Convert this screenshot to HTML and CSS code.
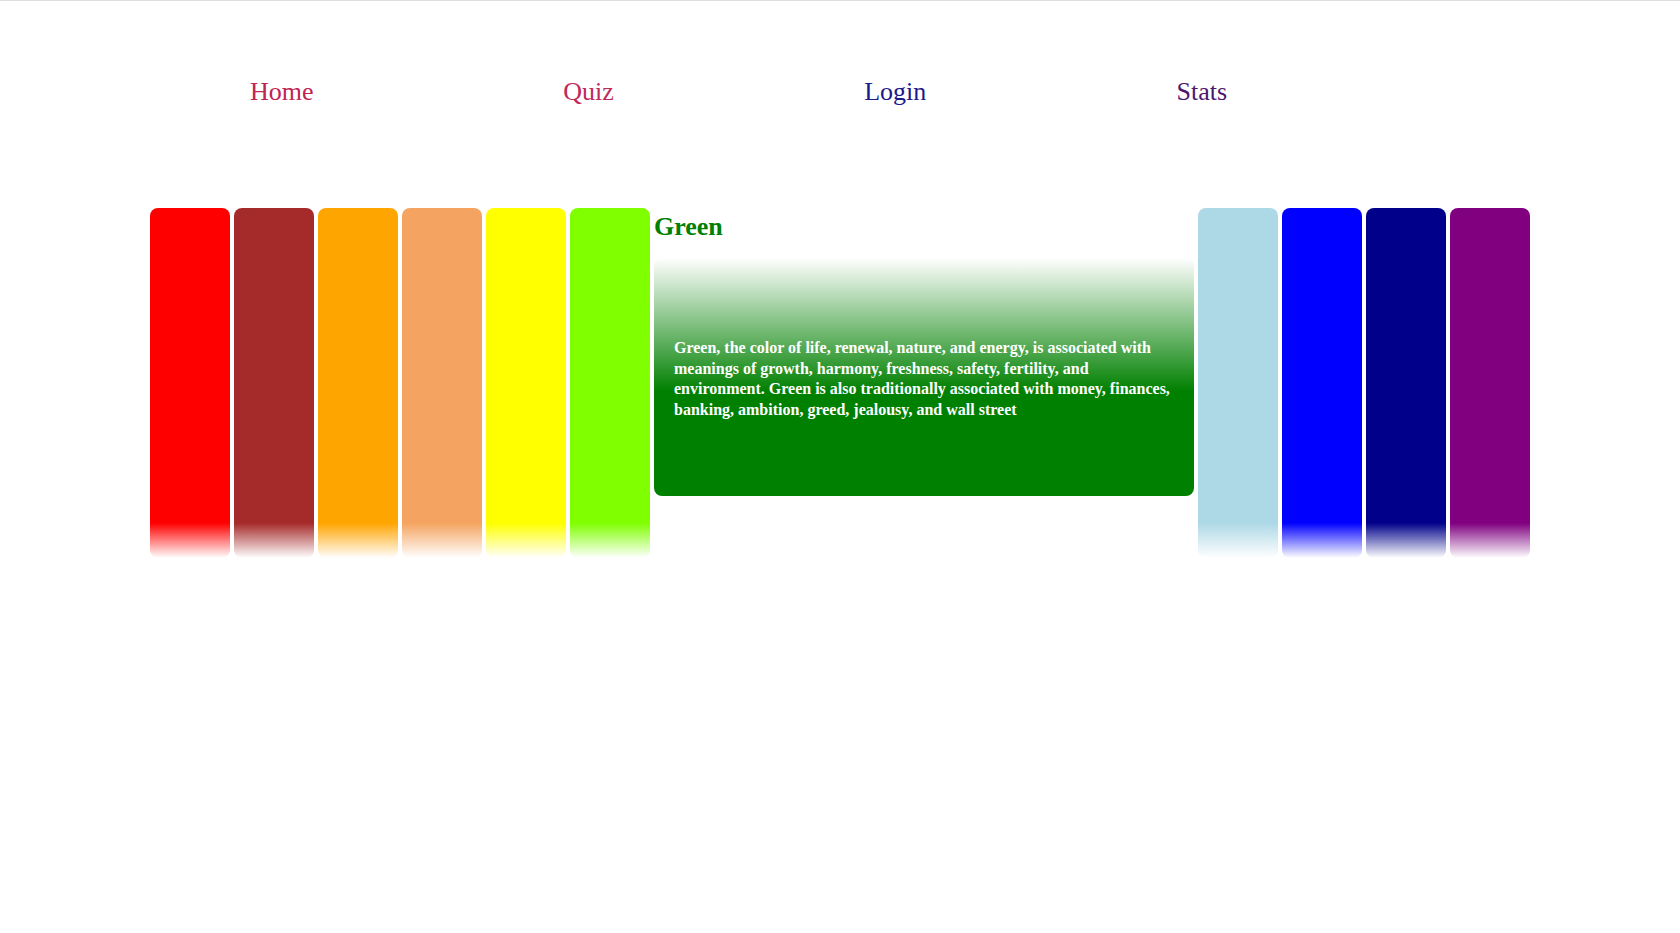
FILE: index.html
```html
<!DOCTYPE html>
<html lang="en">
<head>
<meta charset="utf-8">
<title>Colors</title>
<link rel="stylesheet" href="styles.css">
</head>
<body>
<nav class="nav">
  <a class="nav-link home" href="#">Home</a>
  <a class="nav-link quiz" href="#">Quiz</a>
  <a class="nav-link login" href="#">Login</a>
  <a class="nav-link stats" href="#">Stats</a>
</nav>
<main class="palette">
  <div class="bar red"></div>
  <div class="bar brown"></div>
  <div class="bar orange"></div>
  <div class="bar sandy"></div>
  <div class="bar yellow"></div>
  <div class="bar lime"></div>
  <section class="panel">
    <h2 class="panel-title">Green</h2>
    <div class="panel-box">
      <p class="panel-text">Green, the color of life, renewal, nature, and energy, is associated with meanings of growth, harmony, freshness, safety, fertility, and environment. Green is also traditionally associated with money, finances, banking, ambition, greed, jealousy, and wall street</p>
    </div>
  </section>
  <div class="bar lightblue"></div>
  <div class="bar blue"></div>
  <div class="bar darkblue"></div>
  <div class="bar purple"></div>
</main>
</body>
</html>
```
FILE: styles.css
```css
html, body {
  margin: 0;
  padding: 0;
  background: #ffffff;
}
body {
  border-top: 1px solid #dddddd;
  font-family: "Liberation Serif", "Times New Roman", serif;
}
.nav {
  display: flex;
  padding: 76px 0 0 128.5px;
}
.nav-link {
  width: 306.7px;
  text-align: center;
  font-size: 26px;
  line-height: 30px;
  text-decoration: none;
}
.home { color: #bf2453; }
.quiz { color: #c0285a; }
.login { color: #1b1a8c; }
.stats { color: #4a176e; }

.palette {
  display: flex;
  justify-content: center;
  gap: 4px;
  margin-top: 101px;
}
.bar {
  width: 80px;
  height: 350px;
  border-radius: 8px;
  flex: none;
}
.red { background: linear-gradient(to bottom, #ff0000 90%, rgba(255,0,0,0)); }
.brown { background: linear-gradient(to bottom, #a52a2a 90%, rgba(165,42,42,0)); }
.orange { background: linear-gradient(to bottom, #ffa500 90%, rgba(255,165,0,0)); }
.sandy { background: linear-gradient(to bottom, #f4a460 90%, rgba(244,164,96,0)); }
.yellow { background: linear-gradient(to bottom, #ffff00 90%, rgba(255,255,0,0)); }
.lime { background: linear-gradient(to bottom, #7fff00 90%, rgba(127,255,0,0)); }
.lightblue { background: linear-gradient(to bottom, #add8e6 90%, rgba(173,216,230,0)); }
.blue { background: linear-gradient(to bottom, #0000ff 90%, rgba(0,0,255,0)); }
.darkblue { background: linear-gradient(to bottom, #00008b 90%, rgba(0,0,139,0)); }
.purple { background: linear-gradient(to bottom, #800080 90%, rgba(128,0,128,0)); }

.panel {
  width: 540px;
  flex: none;
  display: flex;
  flex-direction: column;
  padding-top: 4px;
}
.panel-title {
  margin: 0 0 16px;
  font-size: 26px;
  font-weight: bold;
  color: #008000;
  line-height: 30px;
}
.panel-box {
  height: 238px;
  box-sizing: border-box;
  padding: 80px 20px 0;
  border-radius: 8px;
  background: linear-gradient(to bottom, rgba(0,128,0,0) 0%, #008000 56%);
}
.panel-text {
  margin: 0;
  color: #ffffff;
  font-size: 16px;
  font-weight: bold;
  line-height: 20.7px;
}
```
